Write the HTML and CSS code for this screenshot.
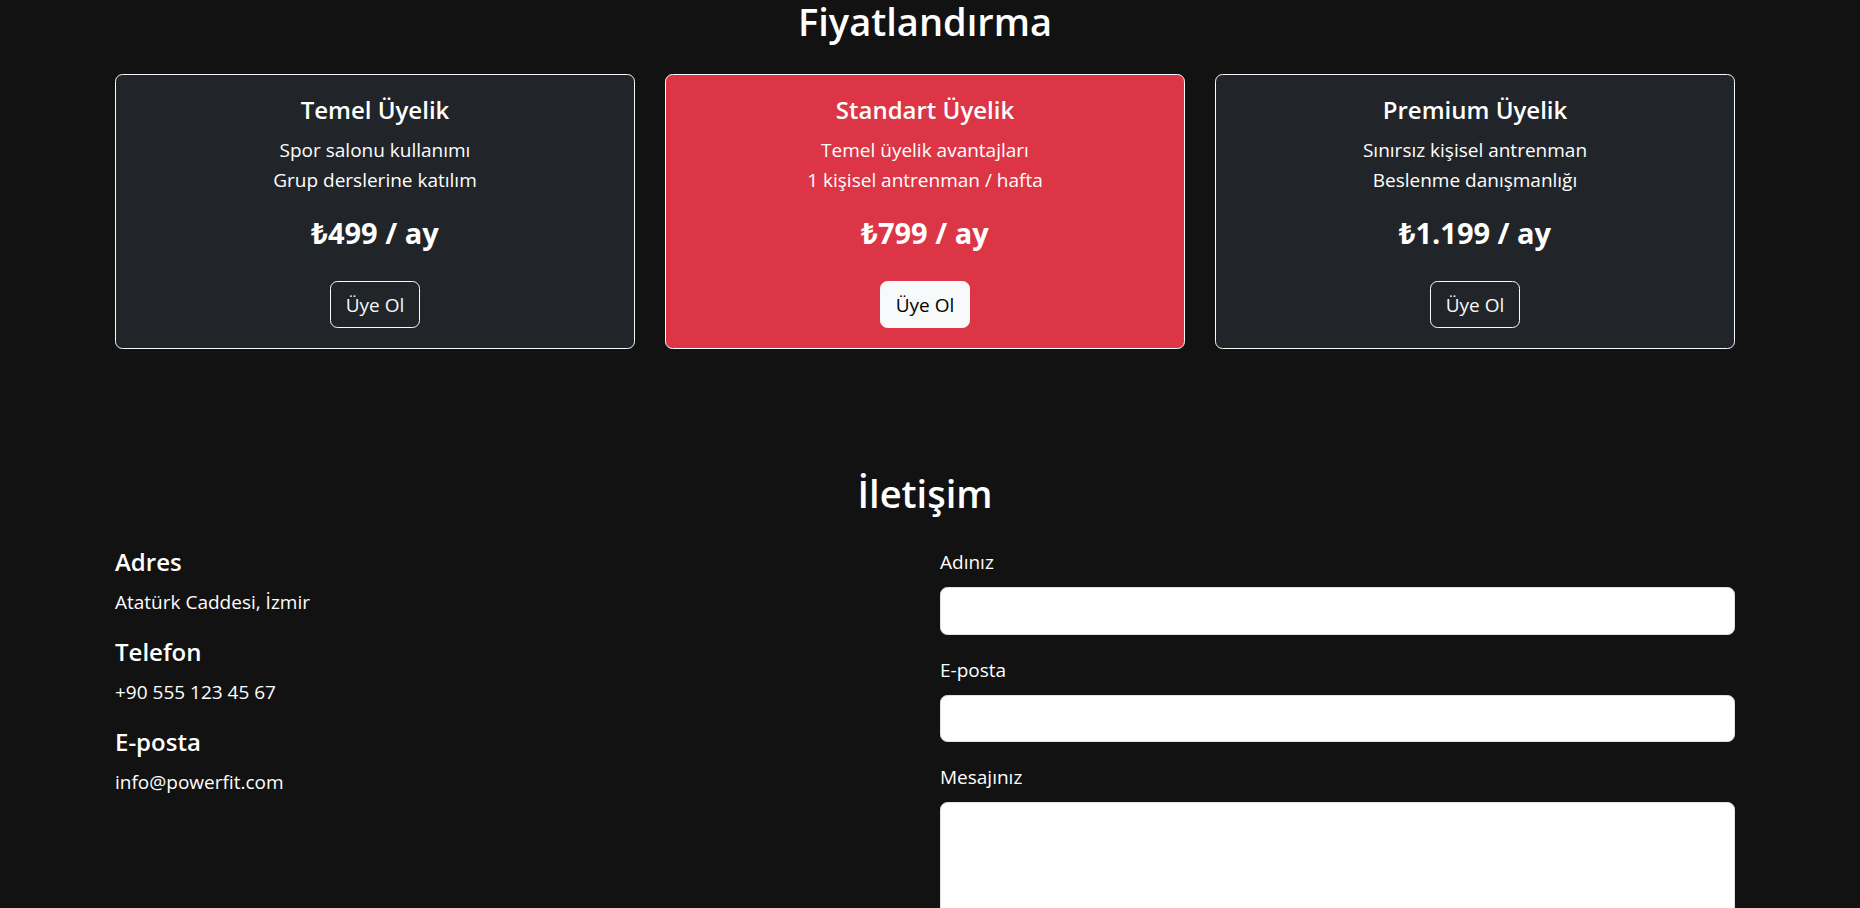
FILE: index.html
```html
<!DOCTYPE html>
<html lang="tr">
<head>
<meta charset="utf-8">
<title>PowerFit</title>
<link rel="stylesheet" href="styles.css">
</head>
<body>
  <section class="section pricing">
    <div class="wrap">
      <h2 class="section-title first">Fiyatlandırma</h2>
      <div class="plans">
        <div class="plan plan-dark">
          <h5 class="plan-title">Temel Üyelik</h5>
          <p class="plan-text">Spor salonu kullanımı<br>Grup derslerine katılım</p>
          <h4 class="plan-price">₺499 / ay</h4>
          <a class="btn btn-outline" href="#">Üye Ol</a>
        </div>
        <div class="plan plan-red">
          <h5 class="plan-title">Standart Üyelik</h5>
          <p class="plan-text">Temel üyelik avantajları<br>1 kişisel antrenman / hafta</p>
          <h4 class="plan-price">₺799 / ay</h4>
          <a class="btn btn-light" href="#">Üye Ol</a>
        </div>
        <div class="plan plan-dark">
          <h5 class="plan-title">Premium Üyelik</h5>
          <p class="plan-text">Sınırsız kişisel antrenman<br>Beslenme danışmanlığı</p>
          <h4 class="plan-price">₺1.199 / ay</h4>
          <a class="btn btn-outline" href="#">Üye Ol</a>
        </div>
      </div>
    </div>
  </section>

  <section class="section contact">
    <div class="wrap">
      <h2 class="section-title">İletişim</h2>
      <div class="contact-grid">
        <div class="contact-info">
          <h5 class="info-title">Adres</h5>
          <p class="info-text">Atatürk Caddesi, İzmir</p>
          <h5 class="info-title">Telefon</h5>
          <p class="info-text">+90 555 123 45 67</p>
          <h5 class="info-title">E-posta</h5>
          <p class="info-text">info@powerfit.com</p>
        </div>
        <form class="contact-form">
          <div class="field">
            <label class="field-label" for="name">Adınız</label>
            <input class="field-input" id="name" type="text">
          </div>
          <div class="field">
            <label class="field-label" for="mail">E-posta</label>
            <input class="field-input" id="mail" type="email">
          </div>
          <div class="field">
            <label class="field-label" for="msg">Mesajınız</label>
            <textarea class="field-input field-area" id="msg" rows="5"></textarea>
          </div>
        </form>
      </div>
    </div>
  </section>
</body>
</html>
```

FILE: styles.css
```css
html, body {
  height: 100%;
  overflow: hidden;
}

body {
  margin: 0;
  background: #121212;
  color: #ffffff;
  font-family: "Open Sans", "Noto Sans", "Liberation Sans", sans-serif;
  font-size: 19px;
  line-height: 30px;
}

.wrap {
  width: 1620px;
  margin-left: 115px;
}

.section.pricing {
  padding-bottom: 60px;
}

.section.contact {
  padding-top: 60px;
}

.section-title {
  margin: 0 0 30px;
  font-size: 38px;
  font-weight: 600;
  line-height: 48px;
  text-align: center;
}

.section-title.first {
  margin-bottom: 32px;
  line-height: 42px;
}

.plans {
  display: grid;
  grid-template-columns: repeat(3, 1fr);
  column-gap: 30px;
}

.plan {
  display: flex;
  flex-direction: column;
  align-items: center;
  text-align: center;
  padding: 20px;
  border: 1px solid #f8f9fa;
  border-radius: 7.5px;
}

.plan-dark {
  background: #212529;
}

.plan-red {
  background: #dc3545;
}

.plan-title {
  margin: 0 0 10px;
  font-size: 24px;
  font-weight: 600;
  line-height: 30px;
}

.plan-text {
  margin: 0 0 20px;
}

.plan-price {
  margin: 0 0 30px;
  font-size: 29px;
  font-weight: 700;
  line-height: 36px;
}

.btn {
  display: inline-block;
  padding: 7.5px 15px;
  font-size: 19px;
  line-height: 30px;
  border-radius: 7.5px;
  text-decoration: none;
  border: 1px solid #f8f9fa;
}

.btn-outline {
  color: #f8f9fa;
  background: transparent;
}

.btn-light {
  color: #000000;
  background: #f8f9fa;
}

.contact-grid {
  display: grid;
  grid-template-columns: 1fr 1fr;
  column-gap: 30px;
}

.info-title {
  margin: 0 0 10px;
  font-size: 24px;
  font-weight: 600;
  line-height: 30px;
}

.info-text {
  margin: 0 0 20px;
}

.field {
  margin-bottom: 20px;
}

.field-label {
  display: block;
  margin-bottom: 10px;
}

.field-input {
  display: block;
  box-sizing: border-box;
  width: 100%;
  height: 47.5px;
  padding: 7.5px 15px;
  font: inherit;
  color: #212529;
  background: #ffffff;
  border: 1px solid #dee2e6;
  border-radius: 7.5px;
}

.field-area {
  height: 170px;
  resize: vertical;
}
```
